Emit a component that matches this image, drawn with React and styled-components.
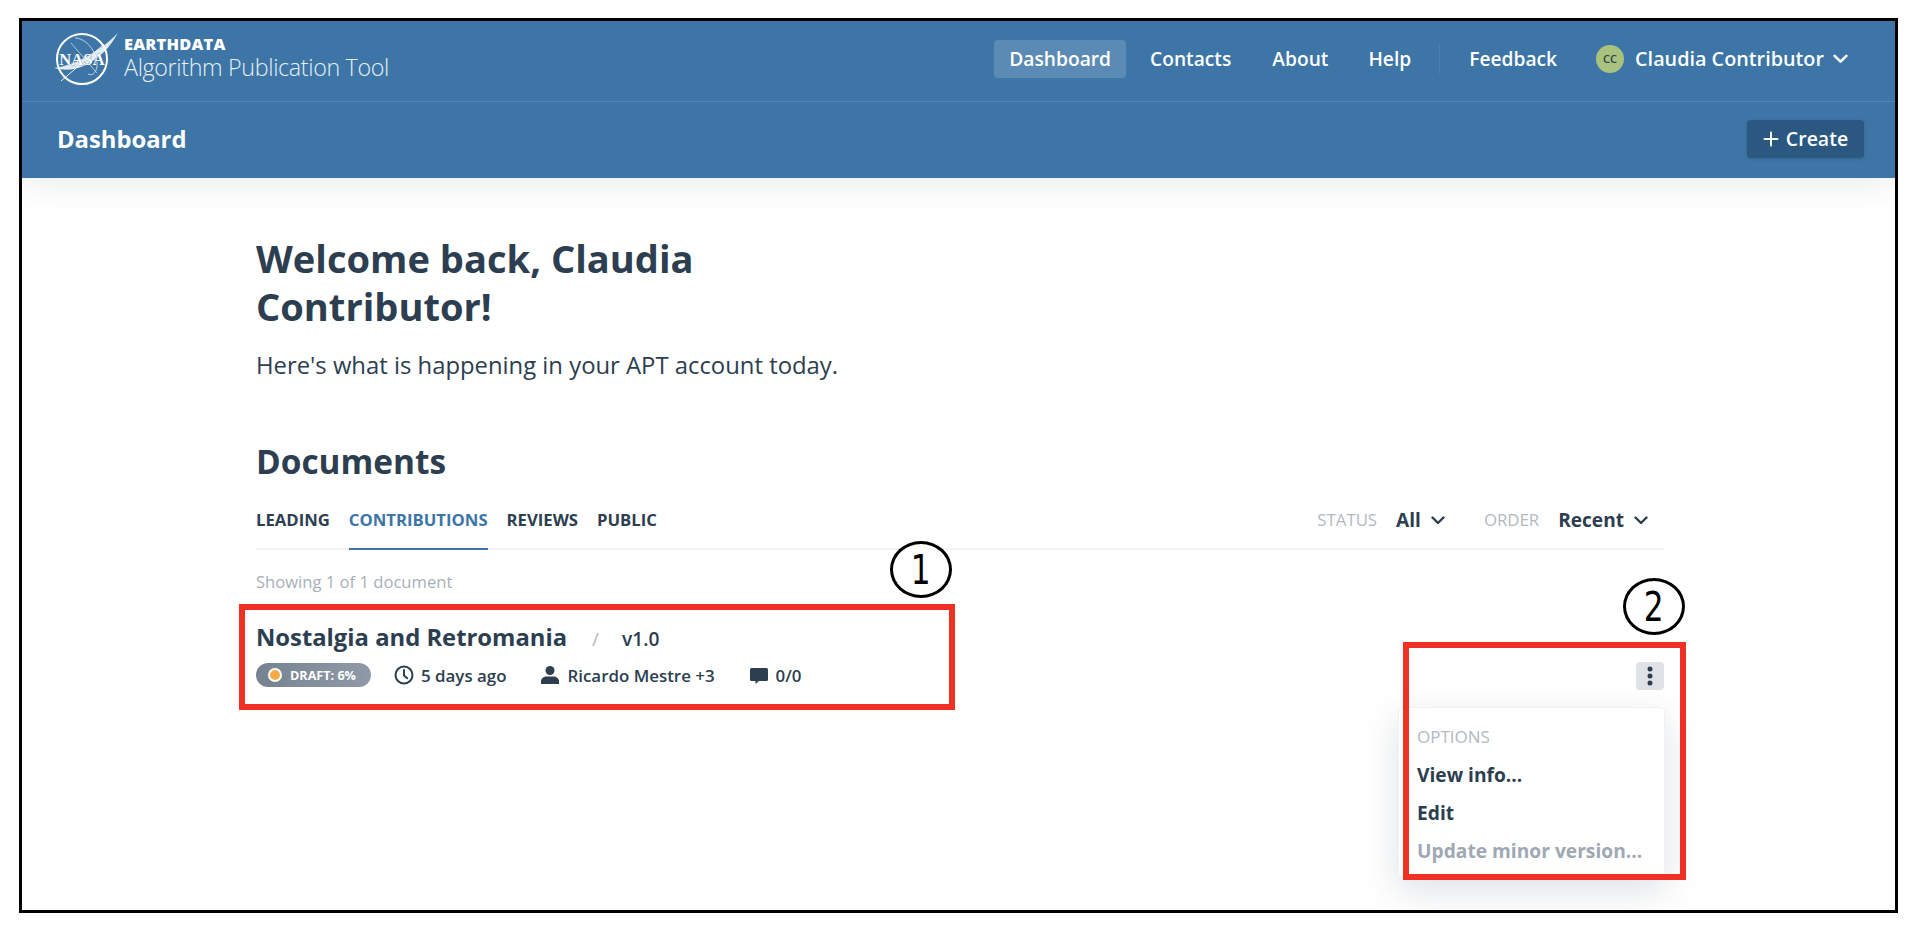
import React from 'react';
import styled, { createGlobalStyle } from 'styled-components';

const Global = createGlobalStyle`
  html, body { margin: 0; padding: 0; background: #fff; }
  body { font-family: "Open Sans", "Liberation Sans", sans-serif; color: #2c3e50; }
  * { box-sizing: border-box; }
`;

const Stage = styled.div`
  width: 1920px;
  height: 934px;
  padding: 18px 22px 21px 19px;
  background: #fff;
  overflow: hidden;
`;
const Frame = styled.div`
  position: relative;
  width: 100%;
  height: 100%;
  border: 3px solid #000;
  overflow: hidden;
  background: #fff;
`;
const Header = styled.header`
  background: #3c75a6;
  box-shadow: 0 0 36px rgba(44, 62, 80, 0.14);
  position: relative;
`;
const TopBar = styled.div`
  height: 81px;
  display: flex;
  align-items: center;
  justify-content: space-between;
  padding: 0 31px 5px 31px;
  border-bottom: 1px solid #4f86b5;
`;
const Brand = styled.div`
  display: flex;
  align-items: center;
  gap: 5px;
`;
const BrandText = styled.div`
  display: flex;
  flex-direction: column;
  color: #fff;
`;
const BrandTop = styled.span`
  font-size: 16.4px;
  line-height: 17px;
  font-weight: 800;
  letter-spacing: 0.2px;
`;
const BrandName = styled.span`
  font-size: 23.3px;
  line-height: 30px;
  font-weight: 300;
  letter-spacing: -0.35px;
  color: #e6eff6;
`;
const Nav = styled.nav`
  display: flex;
  align-items: center;
`;
const NavItem = styled.a`
  height: 38px;
  display: flex;
  align-items: center;
  padding: 0 15px;
  margin-right: ${p => p.$mr || 0}px;
  border-radius: 4px;
  font-size: 19.2px;
  font-weight: 600;
  color: #fff;
  background: ${p => (p.$active ? 'rgba(255,255,255,0.16)' : 'transparent')};
`;
const NavDivider = styled.span`
  width: 1px;
  height: 30px;
  margin: 0 14px 0 13px;
  background: #4a80af;
`;
const UserMenu = styled.div`
  display: flex;
  align-items: center;
  gap: 9px;
  margin-left: 24px;
  margin-right: 16px;
  color: #fff;
  font-size: 19.8px;
  font-weight: 600;
`;
const Avatar = styled.span`
  width: 28px;
  height: 28px;
  margin-right: 2px;
  border-radius: 50%;
  background: #a9c27e;
  color: #2c3e50;
  font-size: 11px;
  font-weight: 600;
  display: flex;
  align-items: center;
  justify-content: center;
`;
const SubBar = styled.div`
  height: 76px;
  display: flex;
  align-items: center;
  justify-content: space-between;
  padding: 0 31px 3px 35px;
`;
const PageTitle = styled.h2`
  margin: 0;
  font-size: 23.8px;
  font-weight: 700;
  color: #fff;
`;
const CreateButton = styled.button`
  width: 117px;
  height: 38px;
  display: flex;
  align-items: center;
  justify-content: center;
  gap: 7px;
  border: 0;
  border-radius: 4px;
  background: #2b5880;
  color: #fff;
  font-family: inherit;
  font-size: 19.5px;
  font-weight: 600;
  box-shadow: 0 1px 3px rgba(44, 62, 80, 0.3);
`;
const Main = styled.main`
  padding: 56px 231px 0 234px;
  position: relative;
`;
const Welcome = styled.h1`
  margin: 0;
  width: 480px;
  font-size: 38.1px;
  line-height: 48px;
  font-weight: 700;
`;
const Lead = styled.p`
  margin: 19px 0 0;
  font-size: 23.85px;
  line-height: 32px;
`;
const SectionTitle = styled.h2`
  margin: 58px 0 0;
  font-size: 33.4px;
  line-height: 44px;
  font-weight: 700;
`;
const TabRow = styled.div`
  margin-top: 13px;
  height: 54px;
  display: flex;
  align-items: center;
  justify-content: space-between;
  border-bottom: 2px solid #f1f2f4;
`;
const Tabs = styled.div`
  display: flex;
  height: 100%;
  gap: 19px;
`;
const Tab = styled.a`
  height: 54px;
  display: flex;
  align-items: center;
  padding-bottom: 5px;
  font-size: 16.7px;
  font-weight: 700;
  text-transform: uppercase;
  color: ${p => (p.$active ? '#3c75a6' : '#2c3e50')};
  border-bottom: 2px solid ${p => (p.$active ? '#3c75a6' : 'transparent')};
`;
const Filters = styled.div`
  display: flex;
  align-items: center;
  padding-right: 16px;
  padding-bottom: 5px;
`;
const FilterLabel = styled.span`
  font-size: 16.8px;
  color: #b3b9c2;
  margin-left: ${p => p.$ml || 0}px;
  margin-right: 19px;
`;
const FilterValue = styled.span`
  display: flex;
  align-items: center;
  gap: 10px;
  font-size: 19.1px;
  font-weight: 700;
`;
const Showing = styled.p`
  margin: 20px 0 0;
  font-size: 16.6px;
  line-height: 24px;
  color: #a8afb9;
`;
const DocRow = styled.div`
  margin-top: 27px;
  display: flex;
  justify-content: space-between;
  align-items: flex-end;
`;
const DocTitle = styled.div`
  display: flex;
  align-items: baseline;
  font-size: 23.8px;
  line-height: 32px;
  font-weight: 700;
`;
const Slash = styled.span`
  margin: 0 23px 0 25px;
  font-size: 19px;
  font-weight: 400;
  color: #b3b9c2;
`;
const Version = styled.span`
  font-size: 19.2px;
  font-weight: 600;
`;
const Meta = styled.div`
  margin-top: 8px;
  display: flex;
  align-items: center;
  font-size: 16.9px;
  font-weight: 600;
`;
const Pill = styled.span`
  width: 115px;
  height: 24px;
  padding-left: 12px;
  margin-right: 23px;
  display: flex;
  align-items: center;
  gap: 8px;
  border-radius: 12px;
  background: linear-gradient(90deg, #6f7c8c 0%, #8b95a2 100%);
  color: #fff;
  font-size: 12.6px;
  font-weight: 700;
  opacity: 0.95;
`;
const Dot = styled.span`
  width: 14px;
  height: 14px;
  border-radius: 50%;
  background: #f5a83c;
  border: 2px solid #fff;
`;
const MetaItem = styled.span`
  display: flex;
  align-items: center;
  gap: 7px;
  margin-right: ${p => p.$mr || 0}px;
`;
const Kebab = styled.button`
  width: 28px;
  height: 28px;
  padding: 0;
  margin-bottom: -3px;
  border: 0;
  border-radius: 4px;
  background: #dfe2e6;
  display: flex;
  align-items: center;
  justify-content: center;
  color: #2c3e50;
`;
const Menu = styled.div`
  position: absolute;
  left: 1376px;
  top: 686px;
  width: 267px;
  height: 171px;
  padding: 14px 18px;
  background: #fff;
  border: 1px solid #f0f1f3;
  border-radius: 5px;
  box-shadow: 0 12px 36px rgba(44, 62, 80, 0.16);
`;
const MenuLabel = styled.div`
  font-size: 17px;
  line-height: 30px;
  color: #b3b9c2;
  margin-bottom: 4px;
`;
const MenuItem = styled.div`
  font-size: 19.2px;
  line-height: 38px;
  font-weight: 700;
  white-space: nowrap;
  color: ${p => (p.$disabled ? '#a0a8b3' : '#2c3e50')};
`;
const RedBox = styled.div`
  position: absolute;
  left: ${p => p.$x}px;
  top: ${p => p.$y}px;
  width: ${p => p.$w}px;
  height: ${p => p.$h}px;
  border: 6px solid #ee3124;
`;
const Callout = styled.div`
  position: absolute;
  left: ${p => p.$x}px;
  top: ${p => p.$y}px;
  width: 62px;
  height: 57px;
  display: flex;
  align-items: center;
  justify-content: center;
  border: 3px solid #000;
  border-radius: 50%;
  background: #fff;
  color: #000;
  font-family: "DejaVu Sans", sans-serif;
  font-size: 40px;
  line-height: 1;
`;
const Digit = styled.span`
  display: block;
  transform: scaleX(0.78);
`;

const Chevron = ({ size = 14, color = 'currentColor', sw = 2.4 }) => (
  <svg width={size} height={size} viewBox="0 0 14 14" fill="none" stroke={color} strokeWidth={sw} strokeLinecap="round" strokeLinejoin="round">
    <path d="M1.5 4.5 7 10l5.5-5.5" />
  </svg>
);

const NasaLogo = () => (
  <svg width="66" height="56" viewBox="0 0 66 56" fill="none">
    <circle cx="29" cy="28" r="25" stroke="#fff" strokeWidth="2" />
    <path d="M22 7c9 0 20 10 22 24 1 9-4 15-9 12" stroke="#dce8f2" strokeWidth="0.8" />
    <path d="M8 50 50 14" stroke="#fff" strokeWidth="0.9" />
    <path d="M18 12l26 30" stroke="#dce8f2" strokeWidth="0.7" />
    <path d="M1 37c8-1 18-4 28-9C43 21 54 13 65 2c-8 14-18 25-32 32C22 39 12 40 1 37z" fill="#fff" opacity="0.85" />
    <text x="29" y="34" textAnchor="middle" fontFamily="Liberation Serif, serif" fontWeight="700" fontSize="16.5" letterSpacing="0.2" fill="#fff" stroke="#3c75a6" strokeWidth="0.5" paintOrder="stroke">NASA</text>
  </svg>
);

const Clock = () => (
  <svg width="20" height="20" viewBox="0 0 20 20" fill="none" stroke="#2c3e50" strokeWidth="2" strokeLinecap="round" strokeLinejoin="round">
    <circle cx="10" cy="10" r="8.5" />
    <path d="M10 5v5.5l3.2 2.8" />
  </svg>
);
const Person = () => (
  <svg width="20" height="20" viewBox="0 0 20 20" fill="#2c3e50">
    <circle cx="10" cy="5.5" r="4.5" />
    <path d="M1 19v-2.5C1 13 4 11.5 6.5 11.5h7c2.500 0 5.500 1.500 5.500 5V19z" />
  </svg>
);
const Chat = () => (
  <svg width="20" height="20" viewBox="0 0 20 20" fill="#2c3e50">
    <path d="M2.500 3h15A1.500 1.500 0 0 1 19 4.500v10a1.500 1.500 0 0 1-1.500 1.500H10l-3.500 3v-3h-4A1.500 1.500 0 0 1 1 14.500v-10A1.500 1.500 0 0 1 2.500 3z" />
  </svg>
);
const Dots = () => (
  <svg width="6" height="20" viewBox="0 0 6 20" fill="#2c3e50">
    <circle cx="3" cy="3" r="2.500" />
    <circle cx="3" cy="10" r="2.500" />
    <circle cx="3" cy="17" r="2.500" />
  </svg>
);
const Plus = () => (
  <svg width="16" height="16" viewBox="0 0 16 16" fill="none" stroke="#fff" strokeWidth="2" strokeLinecap="round">
    <path d="M8 1.500v13M1.500 8h13" />
  </svg>
);

export default function App() {
  return (
    <Stage>
      <Global />
      <Frame>
        <Header>
          <TopBar>
            <Brand>
              <NasaLogo />
              <BrandText>
                <BrandTop>EARTHDATA</BrandTop>
                <BrandName>Algorithm Publication Tool</BrandName>
              </BrandText>
            </Brand>
            <Nav>
              <NavItem $active $mr={9}>Dashboard</NavItem>
              <NavItem $mr={11}>Contacts</NavItem>
              <NavItem $mr={10}>About</NavItem>
              <NavItem>Help</NavItem>
              <NavDivider />
              <NavItem>Feedback</NavItem>
              <UserMenu>
                <Avatar>CC</Avatar>
                Claudia Contributor
                <Chevron size={15} color="#fff" />
              </UserMenu>
            </Nav>
          </TopBar>
          <SubBar>
            <PageTitle>Dashboard</PageTitle>
            <CreateButton><Plus />Create</CreateButton>
          </SubBar>
        </Header>
        <Main>
          <Welcome>Welcome back, Claudia Contributor!</Welcome>
          <Lead>Here's what is happening in your APT account today.</Lead>
          <SectionTitle>Documents</SectionTitle>
          <TabRow>
            <Tabs>
              <Tab>Leading</Tab>
              <Tab $active>Contributions</Tab>
              <Tab>Reviews</Tab>
              <Tab>Public</Tab>
            </Tabs>
            <Filters>
              <FilterLabel>STATUS</FilterLabel>
              <FilterValue>All <Chevron /></FilterValue>
              <FilterLabel $ml={39}>ORDER</FilterLabel>
              <FilterValue>Recent <Chevron /></FilterValue>
            </Filters>
          </TabRow>
          <Showing>Showing 1 of 1 document</Showing>
          <DocRow>
            <div>
              <DocTitle>
                Nostalgia and Retromania
                <Slash>/</Slash>
                <Version>v1.0</Version>
              </DocTitle>
              <Meta>
                <Pill><Dot />DRAFT: 6%</Pill>
                <MetaItem $mr={34}><Clock />5 days ago</MetaItem>
                <MetaItem $mr={34}><Person />Ricardo Mestre +3</MetaItem>
                <MetaItem><Chat />0/0</MetaItem>
              </Meta>
            </div>
            <Kebab aria-label="Options"><Dots /></Kebab>
          </DocRow>
        </Main>
        <Menu>
          <MenuLabel>OPTIONS</MenuLabel>
          <MenuItem>View info...</MenuItem>
          <MenuItem>Edit</MenuItem>
          <MenuItem $disabled>Update minor version...</MenuItem>
        </Menu>
        <RedBox $x={217} $y={583} $w={716} $h={106} />
        <RedBox $x={1381} $y={621} $w={283} $h={238} />
        <Callout $x={868} $y={520}><Digit>1</Digit></Callout>
        <Callout $x={1601} $y={557}><Digit>2</Digit></Callout>
      </Frame>
    </Stage>
  );
}
